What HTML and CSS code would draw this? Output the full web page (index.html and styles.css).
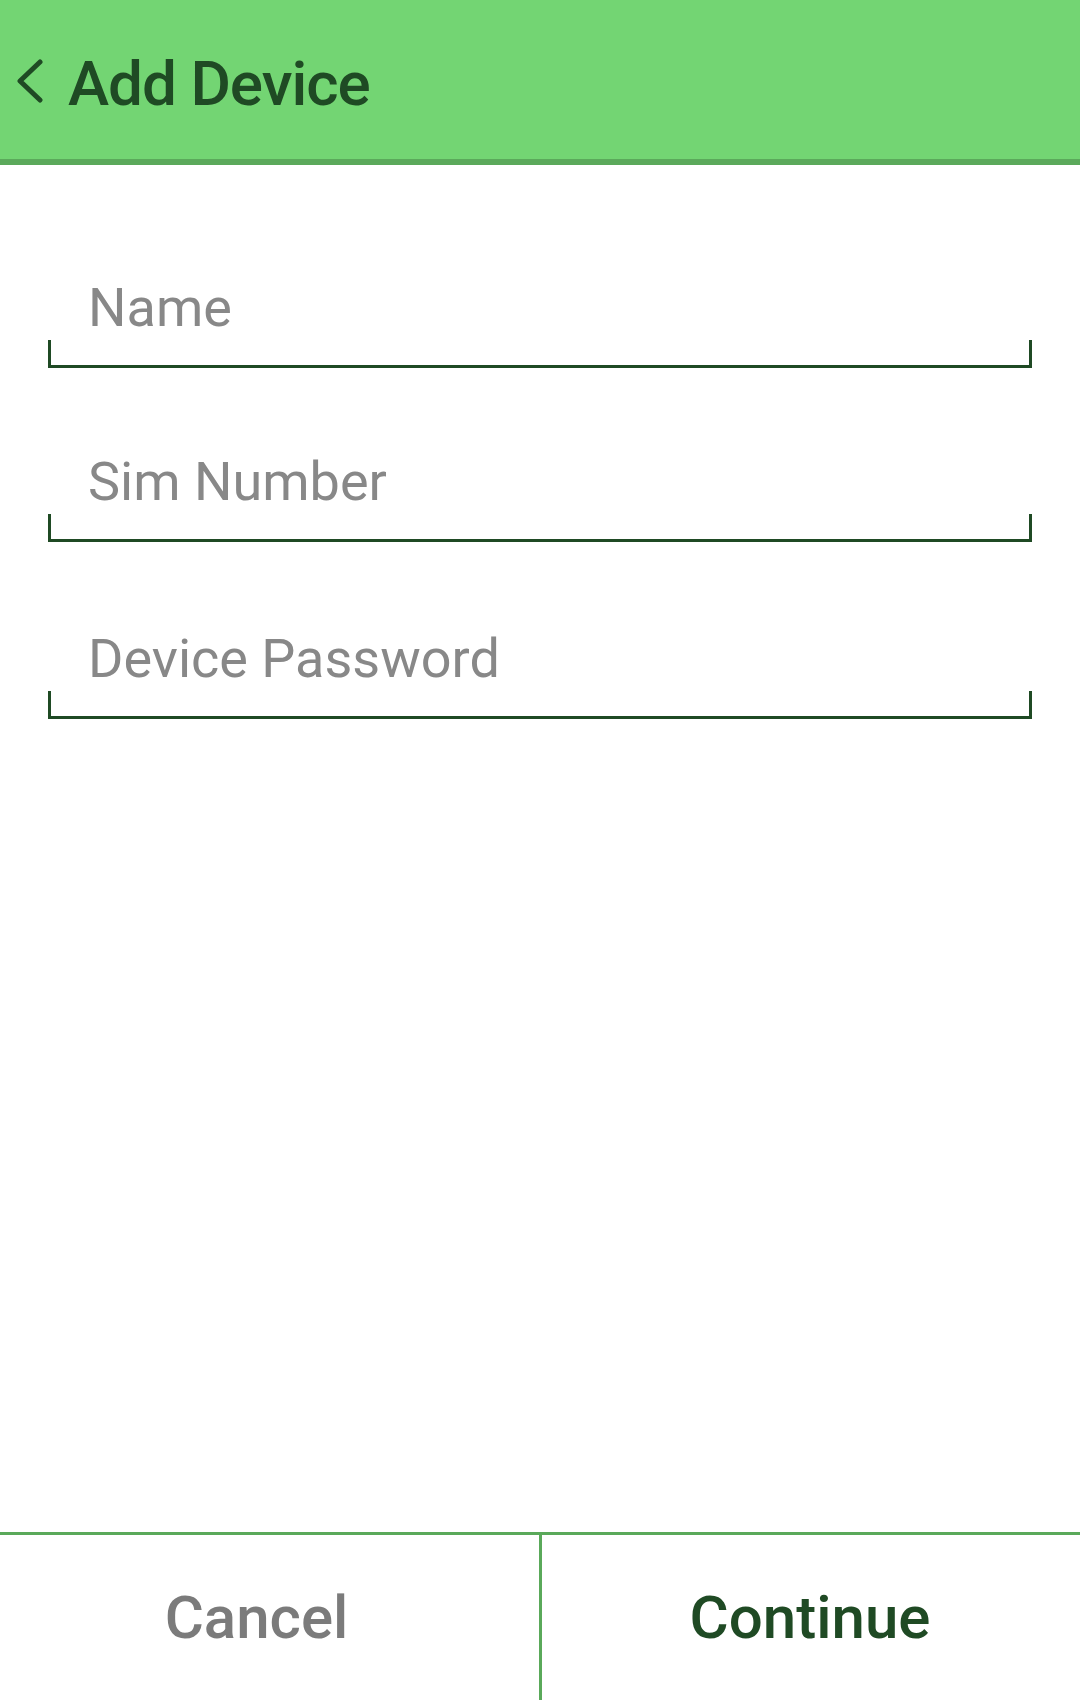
FILE: index.html
```html
<!DOCTYPE html>
<html>
<head>
<meta charset="utf-8">
<link rel="stylesheet" href="styles.css">
</head>
<body>
<div class="page">
  <header class="appbar">
    <svg class="back" width="30" height="50" viewBox="0 0 30 50">
      <polyline points="23,5 3,24 23,43" fill="none" stroke="#1F4A24" stroke-width="5" stroke-linecap="round" stroke-linejoin="round"/>
    </svg>
    <span class="title">Add Device</span>
  </header>
  <main class="form">
    <div class="field">
      <div class="label">Name</div>
      <div class="line"></div>
    </div>
    <div class="field">
      <div class="label">Sim Number</div>
      <div class="line"></div>
    </div>
    <div class="field field-last">
      <div class="label">Device Password</div>
      <div class="line"></div>
    </div>
  </main>
  <footer class="actions">
    <div class="btn cancel">Cancel</div>
    <div class="btn continue">Continue</div>
  </footer>
</div>
</body>
</html>
```
FILE: styles.css
```css
html, body {
  margin: 0;
  padding: 0;
  background: #ffffff;
}
.page {
  height: 1700px;
  display: flex;
  flex-direction: column;
  font-family: Roboto, "Liberation Sans", sans-serif;
}
.appbar {
  background: #73D573;
  border-bottom: 6px solid #5BA95B;
  display: flex;
  align-items: center;
  padding-left: 17px;
  padding-top: 8px;
  box-sizing: content-box;
  height: 151px;
}
.back {
  display: block;
  margin-top: -4px;
}
.title {
  margin-left: 21px;
  font-size: 62px;
  font-weight: 500;
  line-height: 62px;
  letter-spacing: -1px;
  color: #1F4A24;
}
.form {
  flex: 1;
  padding: 116px 48px 0 48px;
  display: flex;
  flex-direction: column;
  gap: 87px;
}
.field {
  display: flex;
  flex-direction: column;
}
.field-last {
  margin-top: 3px;
}
.label {
  font-size: 54px;
  line-height: 54px;
  color: #888888;
  padding-left: 40px;
}
.line {
  margin-top: 5px;
  height: 25px;
  border: 3px solid #1F4A24;
  border-top: none;
}
.actions {
  height: 165px;
  border-top: 3px solid #5AA95A;
  display: grid;
  grid-template-columns: 539px 1fr;
}
.btn {
  display: flex;
  align-items: center;
  justify-content: center;
  font-size: 60px;
  font-weight: 500;
  line-height: 60px;
}
.cancel {
  color: #7B7B7B;
  padding-right: 26px;
}
.continue {
  color: #1F4A24;
  border-left: 3px solid #5AA95A;
  padding-right: 2px;
}
```
